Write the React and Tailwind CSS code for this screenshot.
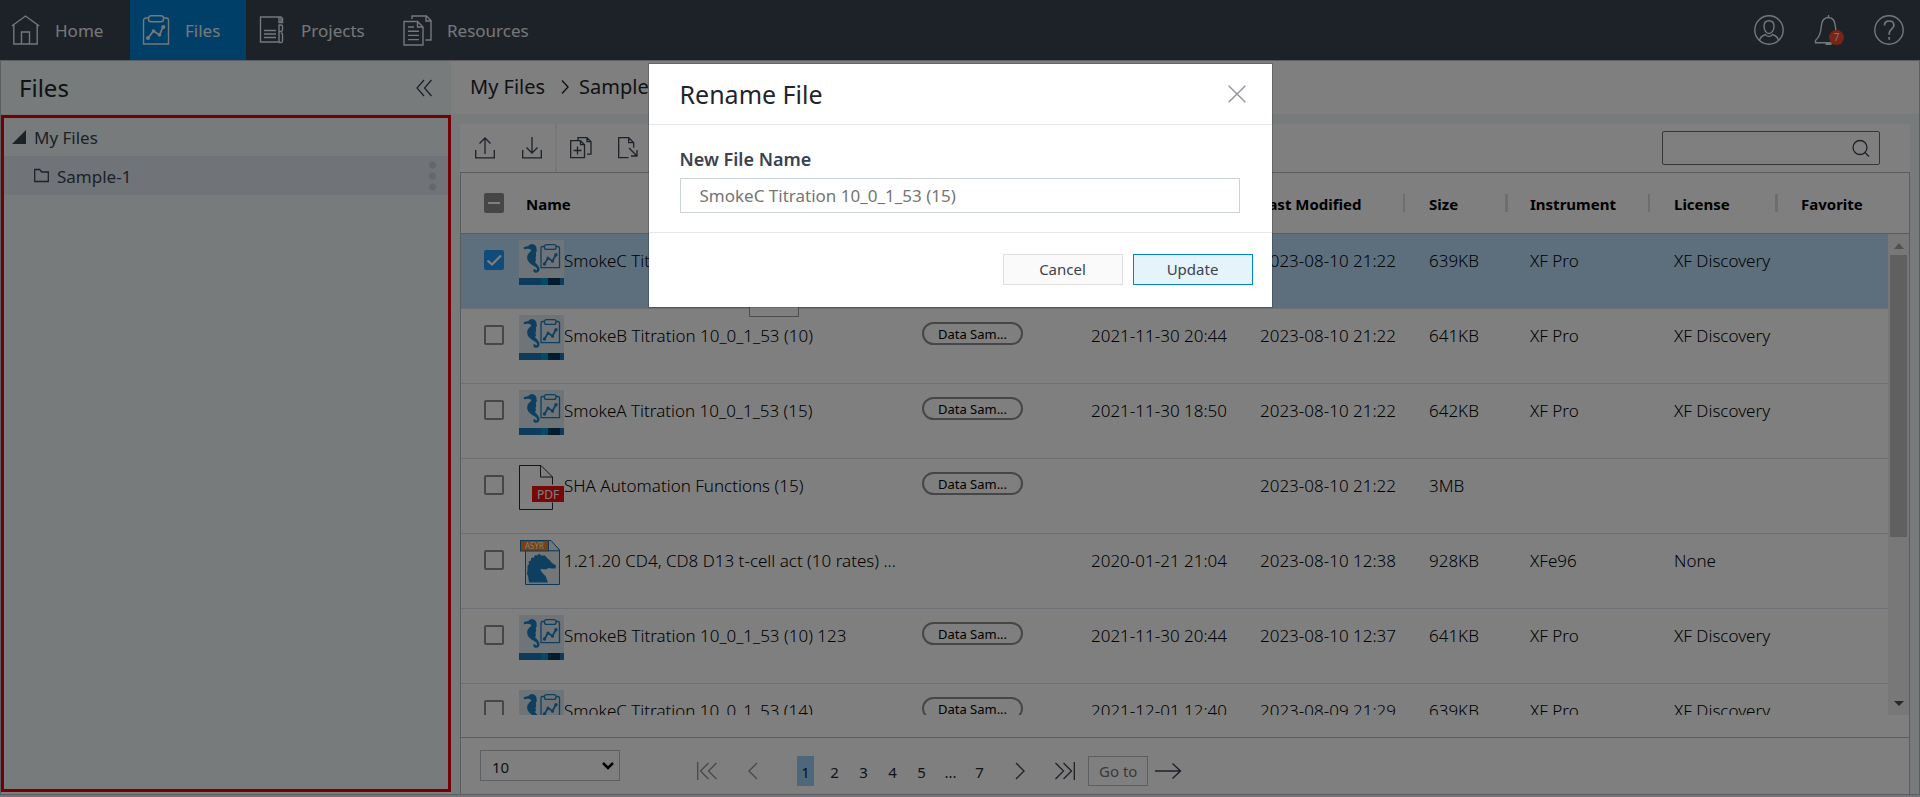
const NAV = [
  { label: "Home", icon: HomeIcon, w: "w-[130px] pl-[11px] gap-[15px]" },
  { label: "Files", icon: ClipIcon, w: "w-[116px] pl-[12px] gap-[15px]", active: true },
  { label: "Projects", icon: ProjectsIcon, w: "w-[145px] pl-[13px] gap-[16px]" },
  { label: "Resources", icon: ResourcesIcon, w: "pl-[12px] gap-[15px]" },
];

const FILES = [
  { name: "SmokeC Titration 10_0_1_53 (15)", icon: "xf", modified: "2023-08-10 21:22", size: "639KB", instrument: "XF Pro", license: "XF Discovery", selected: true },
  { name: "SmokeB Titration 10_0_1_53 (10)", icon: "xf", tag: true, created: "2021-11-30 20:44", modified: "2023-08-10 21:22", size: "641KB", instrument: "XF Pro", license: "XF Discovery" },
  { name: "SmokeA Titration 10_0_1_53 (15)", icon: "xf", tag: true, created: "2021-11-30 18:50", modified: "2023-08-10 21:22", size: "642KB", instrument: "XF Pro", license: "XF Discovery" },
  { name: "SHA Automation Functions (15)", icon: "pdf", tag: true, modified: "2023-08-10 21:22", size: "3MB" },
  { name: "1.21.20 CD4, CD8 D13 t-cell act (10 rates) ...", icon: "asyr", created: "2020-01-21 21:04", modified: "2023-08-10 12:38", size: "928KB", instrument: "XFe96", license: "None" },
  { name: "SmokeB Titration 10_0_1_53 (10) 123", icon: "xf", tag: true, created: "2021-11-30 20:44", modified: "2023-08-10 12:37", size: "641KB", instrument: "XF Pro", license: "XF Discovery" },
  { name: "SmokeC Titration 10_0_1_53 (14)", icon: "xf", tag: true, created: "2021-12-01 12:40", modified: "2023-08-09 21:29", size: "639KB", instrument: "XF Pro", license: "XF Discovery" },
];

function Svg({ w, h, children, sw = 1.4 }) {
  return (
    <svg width={w} height={h} viewBox={`0 0 ${w} ${h}`} fill="none" stroke="currentColor" strokeWidth={sw} className="shrink-0" aria-hidden="true">
      {children}
    </svg>
  );
}

function HomeIcon() {
  return (
    <Svg w={29} h={30}>
      <path d="M.8 11 14.5 1 28.2 11M2.8 10v19h23.4V10M10.5 29V17h8v12" />
    </Svg>
  );
}

function ClipIcon() {
  return (
    <Svg w={28} h={30}>
      <path d="M6.500 3H4a2.500 2.500 0 0 0-2.500 2.500V29h25V5.500A2.500 2.500 0 0 0 24 3h-2.500" />
      <rect x="6.500" y=".8" width="15" height="6" rx="2.500" />
      <path d="M6 23l5.500-7 6 4 3.500-8" strokeWidth="1.8" />
      <g fill="currentColor" stroke="none">
        <circle cx="6" cy="23" r="2" />
        <circle cx="11.500" cy="16" r="1.8" />
        <circle cx="17.500" cy="20" r="1.8" />
        <circle cx="21.300" cy="12" r="2.100" />
      </g>
    </Svg>
  );
}

function ProjectsIcon() {
  return (
    <Svg w={26} h={28}>
      <path d="M22 7V1H1.500v25H20M5 14.500h12M5 18h12M5 21.500h12" />
      <path d="M20 26.500V8.500M20 1v5.500h3.500V1.500M20 9h2a1.500 1.500 0 0 1 1.500 1.500V14a1.500 1.500 0 0 1-1.500 1.500h-2M22 17a1.500 1.500 0 0 1 1.500 1.500V25a1.500 1.500 0 0 1-1.500 1.500h-2" />
    </Svg>
  );
}

function ResourcesIcon() {
  return (
    <Svg w={29} h={31}>
      <path d="M1 6.500h13.500l5.500 5.500v18H1zM14.500 6.500V12H20M5 12h6M5 16.200h11M5 20.400h11M5 24.600h11" />
      <path d="M9 4V1h14.500L28 5.500V25h-5.500M23 1v5h5" />
    </Svg>
  );
}

function SeahorsePath() {
  return (
    <path
      fill="#1c7fc0"
      d="M4.700 8.200 5 7 9.500 6C10.500 4.500 12.500 3.800 14 4.200 16.500 4.800 18 7 17.500 9.500L18 11l-1.200 1.500.4 3-.7 2.500.5 2.500-1 1.500C17.500 24 20 26 20.500 28.500 21 31.500 18.500 33.200 16.300 32.700 14 32.200 13.700 29.500 15.500 29c1 0 .8 1.500 1.700 1.500C18.500 30.300 18.300 28.300 17 27.300L12.500 24.500C9.500 22.500 7.700 19.500 8.200 16.500 8.500 14 10.500 12.500 12.300 10.800L11.500 9.200 9 8.800 5.300 9.200z"
    />
  );
}

function FileIcon({ type }) {
  if (type === "pdf")
    return (
      <svg width="45" height="45" viewBox="0 0 45 45" className="shrink-0" aria-hidden="true">
        <path d="M33.500 19.500V12L22 .5H.5v44h33v-7M21.500.5V12h12" fill="none" stroke="#26292f" />
        <rect x="13" y="21" width="32" height="16" fill="#f01010" />
        <text x="29" y="33.500" textAnchor="middle" fontFamily="Noto Sans" fontSize="12" fontWeight="400" fill="#fff">PDF</text>
      </svg>
    );
  if (type === "asyr")
    return (
      <svg width="45" height="45" viewBox="0 0 45 45" className="shrink-0" aria-hidden="true">
        <path d="M6.500 11v33.500h34V10L31 .5h-2v10h11.500" fill="#e6eef4" stroke="#1b6fa8" />
        <rect x="1.500" y=".5" width="28" height="10.500" fill="#f58220" stroke="#1b6fa8" />
        <path d="M29.500.5H32l8.500 9.500v.8h-11z" fill="#e6eef4" stroke="#1b6fa8" />
        <text x="15.500" y="9" textAnchor="middle" fontFamily="Noto Sans" fontSize="8" fontWeight="400" fill="#fff">ASYR</text>
        <path d="M10 42.500 9 36 8 34l.5-4v-4L10 24l-.5-2.500 2.500-1V18l3-.5 1-2.500 2.500.5 1.500-2 2 2h4l2 2.500 2 1.500 3 3.500 4 2.500-.5 3H33L30 28l-3.500 1.500-3-.5-2.500.5 2.500 3.500 3 3 2.500 6.500z" fill="#1c7fc0" />
      </svg>
    );
  return (
    <svg width="45" height="45" viewBox="0 0 45 45" className="shrink-0" aria-hidden="true">
      <rect width="45" height="38" fill="#dfe9f1" />
      <rect y="38" width="45" height="7" fill="#1c75b8" />
      <rect x="22" y="38" width="7" height="7" fill="#0099c8" />
      <rect x="29" y="38" width="12" height="7" fill="#003a60" />
      <SeahorsePath />
      <g fill="none" stroke="#1c7fc0" strokeWidth="1.300">
        <path d="M25.500 6.500h-2a1.500 1.500 0 0 0-1.500 1.500v19.700h18.500V8a1.500 1.500 0 0 0-1.500-1.500h-2" />
        <rect x="25.500" y="4.600" width="11.500" height="4.800" rx="2" />
        <path d="M25.500 24l3.500-6 4.500 3 3.500-6.500" strokeWidth="1.800" />
      </g>
      <g fill="#1c7fc0">
        <circle cx="25.500" cy="24" r="1.700" />
        <circle cx="29" cy="18" r="1.500" />
        <circle cx="33.500" cy="21.300" r="1.500" />
        <circle cx="37" cy="14.800" r="1.700" />
      </g>
    </svg>
  );
}

function Check({ label, checked }) {
  return (
    <span className="relative block h-5 w-5">
      <input
        type="checkbox"
        aria-label={label}
        defaultChecked={checked}
        className="peer block h-5 w-5 appearance-none rounded-[2px] border-2 border-[#8c8c8c] bg-white checked:border-[#2196f3] checked:bg-[#2196f3]"
      />
      <svg viewBox="0 0 20 20" className="pointer-events-none absolute inset-0 hidden peer-checked:block" fill="none" stroke="#fff" strokeWidth="2.200" aria-hidden="true">
        <path d="M3.500 10.500l4.500 4L17 5.500" />
      </svg>
    </span>
  );
}

function Th({ children, bar = "" }) {
  return (
    <th scope="col" className="p-0 text-left font-bold">
      <div className="flex items-center justify-between">
        <span className="pt-[2px]">{children}</span>
        <span className={`h-[18px] ${bar}`} />
      </div>
    </th>
  );
}

function Cols() {
  return (
    <colgroup>
      <col className="w-[58px]" />
      <col className="w-[403px]" />
      <col className="w-[169px]" />
      <col className="w-[169px]" />
      <col className="w-[169px]" />
      <col className="w-[101px]" />
      <col className="w-[144px]" />
      <col className="w-[127px]" />
      <col />
    </colgroup>
  );
}

function IconButton({ label, children, className = "" }) {
  return (
    <button type="button" aria-label={label} className={`flex items-center justify-center ${className}`}>
      {children}
    </button>
  );
}

function TopBar() {
  return (
    <header className="flex h-[60px] shrink-0 items-stretch justify-between bg-[#3a4250] text-[17px] text-[#eceef0]">
      <nav className="flex">
        {NAV.map(({ label, icon: Icon, w, active }) => (
          <a key={label} href="#" className={`flex items-center ${w} ${active ? "bg-[#0080d0]" : ""}`}>
            <Icon />
            <span className="pt-[2px]">{label}</span>
          </a>
        ))}
      </nav>
      <div className="flex items-center gap-[30px] pr-4">
        <IconButton label="Account">
          <Svg w={30} h={30}>
            <circle cx="15" cy="15" r="14.200" />
            <path d="M15 5.800c3 0 5 2.200 5 5.500 0 3.800-2.300 7.200-5 7.200s-5-3.400-5-7.200c0-3.300 2-5.500 5-5.500zM5.500 25.500c.6-3.500 2.500-4.800 6-6 1.500 2.500 5.500 2.500 7 0 3.500 1.200 5.400 2.500 6 6" />
          </Svg>
        </IconButton>
        <button type="button" aria-label="Notifications" className="relative flex w-[30px]">
          <Svg w={30} h={30}>
            <path d="M14.500 0v2M1.500 25.500v2.200h25v-2.200c-4-3.500-4.500-7-5-13.500-.4-5.500-2.500-9.500-7-9.500S7.500 6.500 7.200 12c-.4 6.500-1.700 10-5.700 13.500zM11.500 29.300h6" />
          </Svg>
          <span className="absolute top-[15px] left-[15px] flex h-[15px] w-[15px] items-center justify-center rounded-full bg-[#f0482d] text-[10px]">7</span>
        </button>
        <IconButton label="Help">
          <Svg w={30} h={30}>
            <circle cx="15" cy="15" r="14.200" />
            <path d="M10.500 10.500c0-2.700 1.800-4.500 4.700-4.500s4.700 1.700 4.700 4.300c0 3.700-4.700 4-4.700 8v1.500M15.200 22v2.800" strokeWidth="1.700" />
          </Svg>
        </IconButton>
      </div>
    </header>
  );
}

function Sidebar() {
  return (
    <aside className="flex w-[450px] shrink-0 flex-col bg-[#eff7f7]">
      <div className="flex h-[54px] items-center justify-between border-b border-[#e3e8ea] pr-[19px] pl-[18px] text-[#1f252d]">
        <h1 className="text-[24px] leading-8">Files</h1>
        <IconButton label="Collapse panel" className="text-[#3a4250]">
          <Svg w={16} h={18} sw={1.300}>
            <path d="M8 1 1 9l7 8M15.500 1l-7 8 7 8" />
          </Svg>
        </IconButton>
      </div>
      <div className="flex-1 border-[3px] border-red-600 text-[17px] text-[#3a4250]">
        <div className="flex h-[38px] items-center gap-2 pl-2">
          <svg width="14" height="14" aria-hidden="true">
            <path d="M14 0v14H0z" fill="#3a4250" />
          </svg>
          <span className="pt-[2px]">My Files</span>
        </div>
        <div className="flex h-[39px] items-center gap-2 bg-[#e1e9f1] pr-3 pl-[30px]">
          <Svg w={15} h={15} sw={1.300}>
            <path d="M.7 13.500V1.500h5l2 2.500h6.600v9.500z" />
          </Svg>
          <span className="flex-1 pt-[2px]">Sample-1</span>
          <IconButton label="Folder options" className="text-[#cfcfcf]">
            <svg width="7" height="30" fill="currentColor" aria-hidden="true">
              <circle cx="3.500" cy="4" r="3.500" />
              <circle cx="3.500" cy="15" r="3.500" />
              <circle cx="3.500" cy="26" r="3.500" />
            </svg>
          </IconButton>
        </div>
      </div>
    </aside>
  );
}

function Toolbar() {
  return (
    <div className="flex h-12 items-center justify-between bg-white pr-[30px] pl-px text-[#3a4250]">
      <div className="flex h-full items-center">
        <IconButton label="Upload" className="w-[47px]">
          <Svg w={20} h={22} sw={1.300}>
            <path d="M.7 13v7.800h18.600V13M10 17V1M4.500 6.500 10 1l5.500 5.500" />
          </Svg>
        </IconButton>
        <IconButton label="Download" className="w-[47px]">
          <Svg w={20} h={22} sw={1.300}>
            <path d="M.7 13v7.800h18.600V13M10 0v16M4.500 10.500 10 16l5.500-5.500" />
          </Svg>
        </IconButton>
        <span className="h-full w-[2px] bg-[#eceff1]" />
        <IconButton label="Copy" className="w-[47px]">
          <Svg w={22} h={22} sw={1.300}>
            <path d="M.7 3.700h9.800l4 4v13H.7zM10.500 3.700v4h4M7.500 9.500v8M3.500 13.500h8M8 3V.7h9l4 4v12.500h-4M17 .7v4h4" />
          </Svg>
        </IconButton>
        <IconButton label="Move" className="w-[47px]">
          <Svg w={20} h={22} sw={1.300}>
            <path d="M10.500 20.700H.7V.7h10l5 5v5M10.700.7v5h5M11 11l8 8M19 13v6h-6" />
          </Svg>
        </IconButton>
      </div>
      <label className="flex h-[34px] w-[218px] items-center rounded-[2px] border border-[#6b6b6b] pr-[9px]">
        <input type="text" aria-label="Search files" className="min-w-0 flex-1 bg-transparent px-2 outline-none" />
        <Svg w={18} h={18} sw={1.300}>
          <circle cx="8" cy="8.500" r="7" />
          <path d="M13 13.500l4 4" />
        </Svg>
      </label>
    </div>
  );
}

function FileTable() {
  return (
    <>
      <table className="w-full table-fixed border-separate border-spacing-0 text-[15px] text-black">
        <Cols />
        <thead>
          <tr className="h-[60px]">
            <th scope="col" className="p-0 pl-[23px]">
              <button type="button" aria-label="Clear selection" className="flex h-5 w-5 items-center justify-center rounded-[2px] bg-[#8c8c8c]">
                <span className="h-[2px] w-3 bg-white" />
              </button>
            </th>
            <th scope="col" className="p-0 pt-[2px] pl-[7px] text-left">Name</th>
            <td />
            <td />
            <Th bar="mr-6 w-[2px] bg-[#d7dce6]">Last Modified</Th>
            <Th bar="mr-[22px] w-[3px] bg-[#d7dce6]">Size</Th>
            <Th bar="mr-6 w-[2px] bg-[#d7dce6]">Instrument</Th>
            <Th bar="mr-[23px] w-[3px] bg-[#d7dce6]">License</Th>
            <Th>Favorite</Th>
          </tr>
        </thead>
      </table>
      <div className="flex min-h-0 flex-1 overflow-hidden border-t border-[#b4b8bd]">
        <div className="min-w-0 flex-1 overflow-hidden">
          <table className="w-full table-fixed border-separate border-spacing-0 text-[17px] leading-6 font-light text-black">
            <Cols />
            <tbody>
              {FILES.map((f) => (
                <tr key={f.name} className={`h-[75px] align-top [&>td]:border-b [&>td]:border-[#dcdfe8] ${f.selected ? "bg-[#bbdefb]" : ""}`}>
                  <td className="p-0 pt-4 pl-[23px]">
                    <Check label={f.name} checked={f.selected} />
                  </td>
                  <td className="p-0 pt-[6px]">
                    <div className="flex">
                      <FileIcon type={f.icon} />
                      <span className="pt-[9px] whitespace-nowrap">{f.name}</span>
                    </div>
                  </td>
                  <td className="p-0 pt-[13px]">
                    {f.tag && (
                      <span className="flex h-[23px] w-[101px] items-center justify-center rounded-full border-2 border-[#8c8c8c] text-[13px] leading-4 font-normal text-black">
                        Data Sam...
                      </span>
                    )}
                  </td>
                  <td className="p-0 pt-[15px]">{f.created}</td>
                  <td className="p-0 pt-[15px]">{f.modified}</td>
                  <td className="p-0 pt-[15px]">{f.size}</td>
                  <td className="p-0 pt-[15px]">{f.instrument}</td>
                  <td className="p-0 pt-[15px]">{f.license}</td>
                  <td />
                </tr>
              ))}
            </tbody>
          </table>
        </div>
        <div className="flex w-[21px] shrink-0 flex-col items-center bg-[#f1f1f1]">
          <svg width="10" height="21" aria-hidden="true">
            <path d="M0 15h10L5 9z" fill="#a3a3a3" />
          </svg>
          <div className="h-[282px] w-[17px] bg-[#c1c1c1]" />
          <svg width="10" height="20" className="mt-auto" aria-hidden="true">
            <path d="M0 6h10l-5 5z" fill="#505050" />
          </svg>
        </div>
      </div>
    </>
  );
}

function Pager() {
  const page = "flex h-[30px] w-[17px] items-center justify-center pt-[2px]";
  return (
    <div className="mt-[22px] flex h-[57px] shrink-0 items-start border-t border-[#b4b8bd] pl-[19px] text-[15px] text-[#1f252d]">
      <div className="relative mt-3 flex">
        <select aria-label="Rows per page" defaultValue="10" className="h-[31px] w-[140px] appearance-none border border-[#b9bfc4] bg-white pt-1 pl-[11px]">
          <option>10</option>
        </select>
        <svg width="12" height="8" className="pointer-events-none absolute top-3 right-[6px]" fill="none" stroke="#000" strokeWidth="2.500" aria-hidden="true">
          <path d="M1 1l5 5 5-5" />
        </svg>
      </div>
      <div className="mt-[18px] ml-[77px] flex h-[30px] items-center text-[#3a4250]">
        <IconButton label="First page" className="text-[#8a9099]">
          <Svg w={20} h={20} sw={1.300}>
            <path d="M.7 1v18M11.500 2l-8 8 8 8M19.500 2l-8 8 8 8" />
          </Svg>
        </IconButton>
        <IconButton label="Previous page" className="ml-[31px] text-[#8a9099]">
          <Svg w={10} h={20} sw={1.300}>
            <path d="M9 2l-8 8 8 8" />
          </Svg>
        </IconButton>
        <div className="ml-[39px] flex gap-3 text-[#1f252d]">
          <button type="button" className={`${page} bg-[#9bd0f5]`}>1</button>
          <button type="button" className={page}>2</button>
          <button type="button" className={page}>3</button>
          <button type="button" className={page}>4</button>
          <button type="button" className={page}>5</button>
          <span className={page}>...</span>
          <button type="button" className={page}>7</button>
        </div>
        <IconButton label="Next page" className="ml-[27px]">
          <Svg w={10} h={20} sw={1.300}>
            <path d="M1 2l8 8-8 8" />
          </Svg>
        </IconButton>
        <IconButton label="Last page" className="ml-[30px]">
          <Svg w={20} h={20} sw={1.300}>
            <path d="M19.300 1v18M.5 2l8 8-8 8M8.500 2l8 8-8 8" />
          </Svg>
        </IconButton>
        <input type="text" aria-label="Go to page" placeholder="Go to" className="ml-[13px] h-[30px] w-[60px] border border-[#b9bfc4] pl-[10px] placeholder:text-[#757575]" />
        <IconButton label="Go" className="ml-[7px]">
          <Svg w={27} h={20} sw={1.400}>
            <path d="M0 10h25M17.500 2.500 25.500 10l-8 7.500" />
          </Svg>
        </IconButton>
      </div>
    </div>
  );
}

function RenameDialog() {
  return (
    <div className="fixed inset-0 flex items-start justify-center bg-black/50 pt-[63px]">
      <div role="dialog" aria-modal="true" aria-labelledby="rename-title" className="w-[625px] border border-black/20 bg-white bg-clip-padding">
        <div className="flex h-[61px] items-center justify-between border-b border-[#e5e7e9] pr-[26px] pl-[31px]">
          <h2 id="rename-title" className="text-[25px] leading-8 text-[#1f252d]">Rename File</h2>
          <IconButton label="Close" className="text-[#8f949b]">
            <Svg w={18} h={18}>
              <path d="M.7.7l16.600 16.600M17.300.7.700 17.300" />
            </Svg>
          </IconButton>
        </div>
        <div className="flex h-[108px] flex-col border-b border-[#e5e7e9] pt-[22px] pr-8 pl-[31px]">
          <label htmlFor="file-name" className="text-[18px] leading-6 font-semibold text-[#3a4250]">New File Name</label>
          <input
            id="file-name"
            type="text"
            defaultValue="SmokeC Titration 10_0_1_53 (15)"
            className="mt-[7px] h-[35px] border border-[#ccd3da] pl-[19px] text-[17px] text-[#757575] outline-none"
          />
        </div>
        <div className="flex justify-end gap-[10px] pt-[21px] pr-[19px] pb-[22px] text-[15px] text-[#3a4250]">
          <button type="button" className="h-[31px] w-[120px] border border-[#dfdfdf] bg-[#fafafa]">Cancel</button>
          <button type="button" className="h-[31px] w-[120px] border border-[#0085ca] bg-[#e5f3fb]">Update</button>
        </div>
      </div>
    </div>
  );
}

export default function App() {
  return (
    <div className="flex h-screen flex-col overflow-hidden bg-[#e4e8f2] font-['Noto_Sans','Open_Sans',sans-serif]">
      <TopBar />
      <div className="mb-[2px] flex min-h-0 flex-1 border border-[#b8bcc4] bg-white">
        <div className="flex pb-[2px]">
          <Sidebar />
        </div>
        <main className="flex min-w-0 flex-1 flex-col">
          <div className="flex h-[53px] shrink-0 items-center bg-white pb-[2px] pl-[19px] text-[20px] text-[#1f252d]">
            <a href="#">My Files</a>
            <span className="mr-[10px] ml-[16px]">
              <Svg w={8} h={16}>
                <path d="M1 1.500 7 8l-6 6.500" />
              </Svg>
            </span>
            <a href="#">Sample-1</a>
          </div>
          <div className="flex min-h-0 flex-1 flex-col bg-[#eff7f7] pt-[10px] pr-[9px] pl-[9px]">
            <div className="relative">
              <Toolbar />
              <div className="absolute top-[163px] left-[289px] h-[30px] w-[50px] border border-[#9a9a9a] bg-white" />
            </div>
            <section className="flex min-h-0 flex-1 flex-col border border-b-0 border-[#b4b8bd] bg-white">
              <FileTable />
              <Pager />
            </section>
          </div>
        </main>
      </div>
      <RenameDialog />
    </div>
  );
}
